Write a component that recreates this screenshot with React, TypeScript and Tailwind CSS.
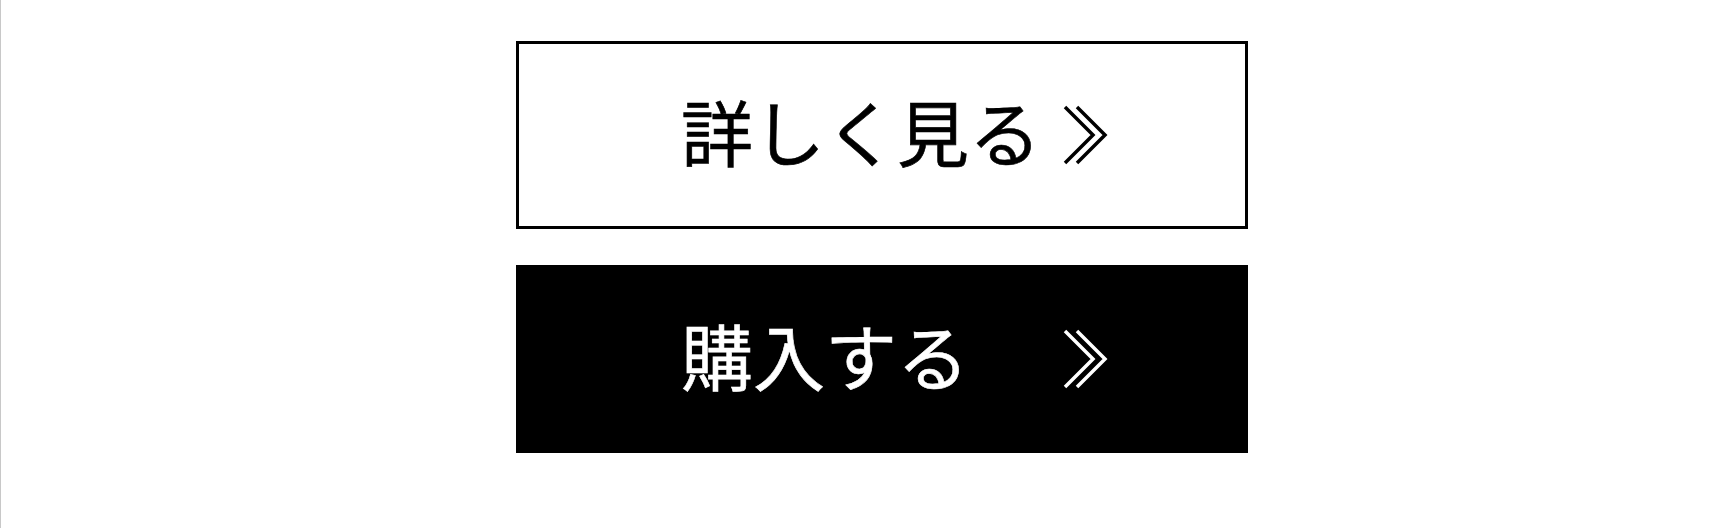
const CTA = [
  { label: "詳しく見る", dark: false },
  { label: "購入する", dark: true },
];

function Chevrons({ color }: { color: string }) {
  return (
    <svg width="50" height="64" viewBox="0 0 50 64" fill="none" className="shrink-0">
      <path d="M3 4 L31 32 L3 60" stroke={color} strokeWidth="3.5" />
      <path d="M15 4 L43 32 L15 60" stroke={color} strokeWidth="3.5" />
    </svg>
  );
}

export default function App() {
  return (
    <div className="h-[528px] w-full border-l border-[#c8c8c8] bg-white">
      <div className="flex flex-col gap-[36px] pl-[515px] pt-[41px]">
        {CTA.map((b) => (
          <a
            key={b.label}
            href="#"
            className={
              b.dark
                ? "flex h-[188px] w-[732px] items-center bg-black pl-[165px] pr-[136px] text-white"
                : "flex h-[188px] w-[732px] items-center border-[3px] border-black bg-white pl-[162px] pr-[133px] text-black"
            }
          >
            <span className="flex-1 pb-[10px] text-[72px] font-normal leading-none [font-family:'Noto_Sans_CJK_JP',sans-serif] [-webkit-text-stroke:0.6px_currentColor]">
              {b.label}
            </span>
            <Chevrons color={b.dark ? "#fff" : "#000"} />
          </a>
        ))}
      </div>
    </div>
  );
}
